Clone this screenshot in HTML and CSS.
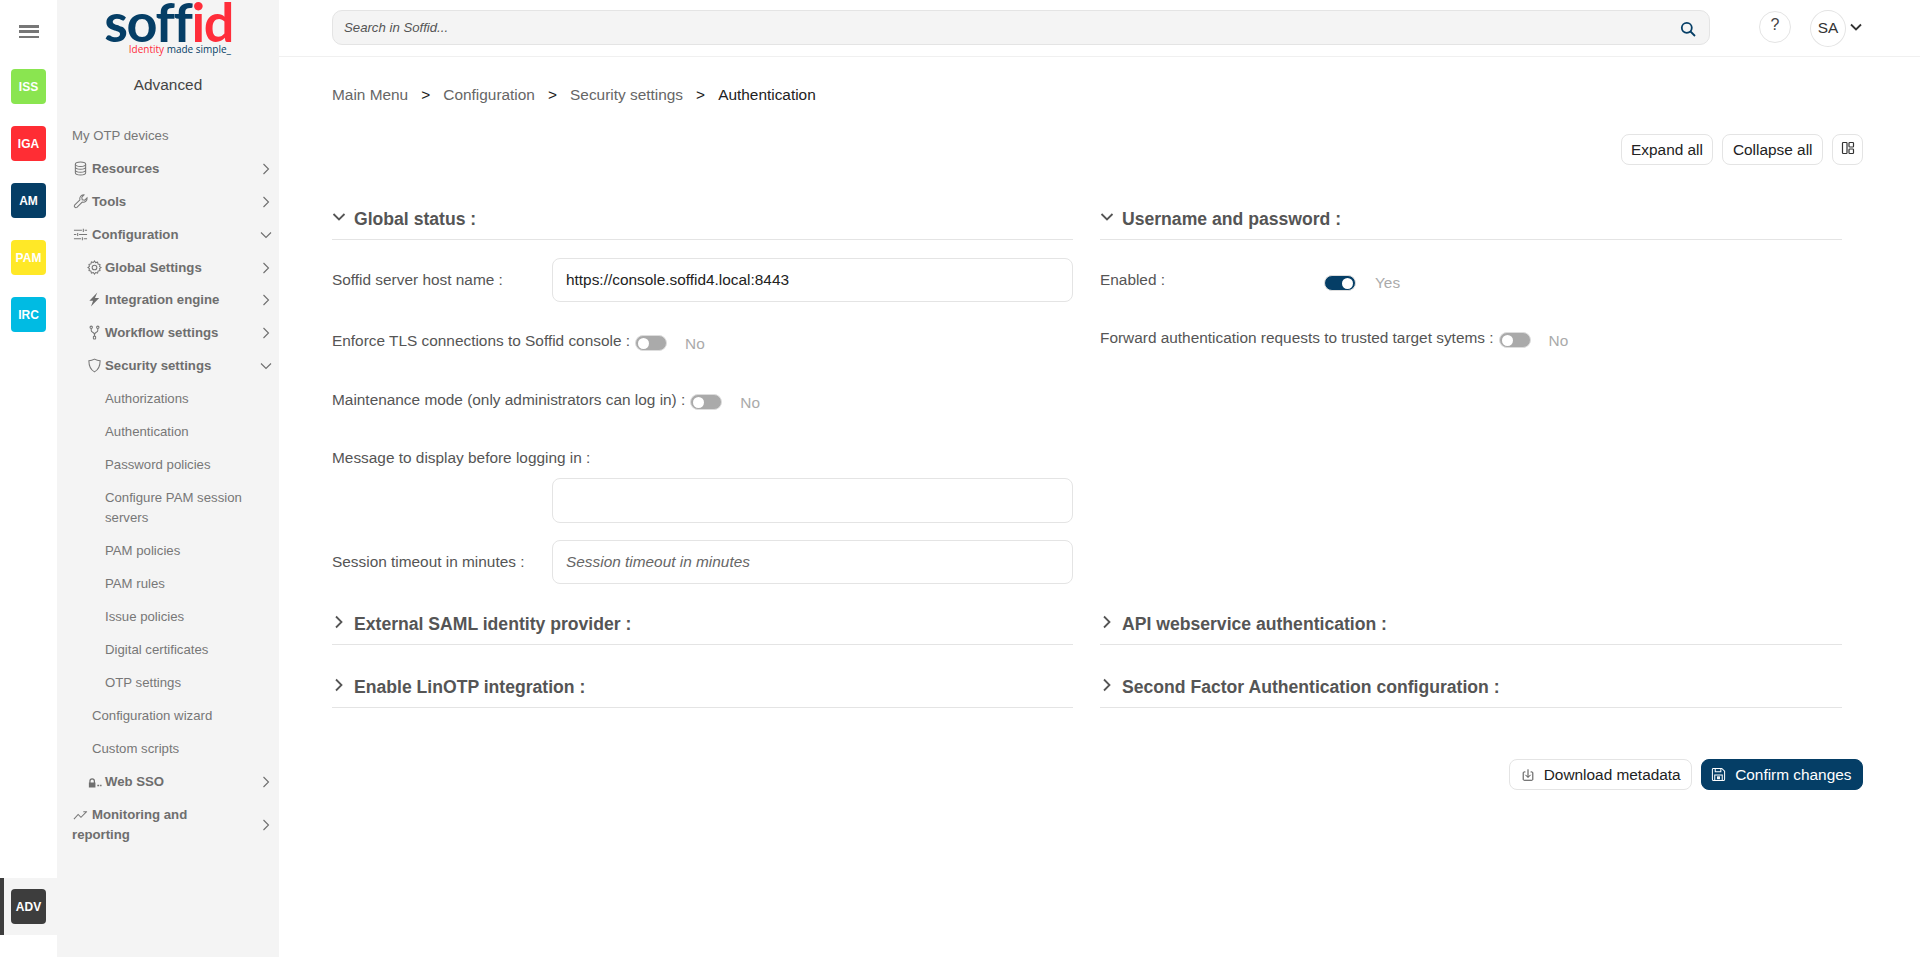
FILE: index.html
```html
<!DOCTYPE html>
<html lang="en">
<head>
<meta charset="utf-8">
<title>Soffid - Authentication</title>
<link rel="stylesheet" href="styles.css">
</head>
<body>
<aside class="rail">
  <button class="burger" aria-label="Menu"><span></span><span></span><span></span></button>
  <div class="rail-item"><span class="tile iss">ISS</span></div>
  <div class="rail-item"><span class="tile iga">IGA</span></div>
  <div class="rail-item"><span class="tile am">AM</span></div>
  <div class="rail-item"><span class="tile pam">PAM</span></div>
  <div class="rail-item"><span class="tile irc">IRC</span></div>
  <div class="rail-item active"><span class="tile adv">ADV</span></div>
</aside>
<nav class="side">
  <div class="logo">
    <div class="logo-word"><span class="navy">soff</span><span class="red">id</span></div>
    <div class="logo-tag"><span class="red">Identity</span> <span class="navy">made simple_</span></div>
  </div>
  <div class="side-title">Advanced</div>
  <ul class="menu">
    <li class="row"><span class="txt">My OTP devices</span></li>
    <li class="row bold"><span class="txt"><svg class="ico" viewBox="0 0 16 16"><ellipse cx="8" cy="3.4" rx="5.5" ry="2.4"/><path d="M2.5 3.4v9.2c0 1.3 2.5 2.4 5.500 2.400s5.500-1.100 5.500-2.400V3.400M2.500 6.500c0 1.300 2.500 2.400 5.500 2.400s5.500-1.100 5.500-2.400M2.500 9.600c0 1.300 2.500 2.400 5.500 2.400s5.500-1.100 5.500-2.400"/></svg>Resources</span><svg class="chev" viewBox="0 0 12 12"><path d="M3.500 1l5 5-5 5"/></svg></li>
    <li class="row bold"><span class="txt"><svg class="ico" viewBox="0 0 16 16"><path d="M15 4.200a4 4 0 0 1-5.200 4.400L4.200 14.300a1.800 1.800 0 0 1-2.500-2.500l5.700-5.600A4 4 0 0 1 11.800 1L9.400 3.400l.4 2.800 2.800.4z"/></svg>Tools</span><svg class="chev" viewBox="0 0 12 12"><path d="M3.500 1l5 5-5 5"/></svg></li>
    <li class="row bold"><span class="txt"><svg class="ico" viewBox="0 0 16 16"><path d="M1 3.500h8.500M12.500 3.500H15M1 8h2.500M6.500 8H15M1 12.500h7.500M11.500 12.500H15M11 1.800v3.400M5 6.300v3.400M10 10.800v3.400"/></svg>Configuration</span><svg class="chev" viewBox="0 0 12 12"><path d="M1 3.500l5 5 5-5"/></svg></li>
    <li class="row bold lv2 short"><span class="txt"><svg class="ico" viewBox="0 0 16 16"><path d="M8 1l1.200 1.800 2.100-.5.500 2.100 2.100.5-.5 2.100L15 8l-1.600 1.200.5 2.100-2.100.5-.5 2.100-2.100-.5L8 15l-1.200-1.600-2.100.5-.5-2.100-2.100-.5.5-2.100L1 8l1.600-1.200-.5-2.100 2.100-.5.500-2.100 2.100.5z"/><circle cx="8" cy="8" r="2.500"/></svg>Global Settings</span><svg class="chev" viewBox="0 0 12 12"><path d="M3.500 1l5 5-5 5"/></svg></li>
    <li class="row bold lv2"><span class="txt"><svg class="ico solid" viewBox="0 0 16 16"><path d="M11 .5L2.500 9.200h4l-2.300 6.300 8.800-9.200H8.500z"/></svg>Integration engine</span><svg class="chev" viewBox="0 0 12 12"><path d="M3.500 1l5 5-5 5"/></svg></li>
    <li class="row bold lv2"><span class="txt"><svg class="ico" viewBox="0 0 16 16"><circle cx="4.500" cy="2.500" r="1.300"/><circle cx="11.500" cy="2.500" r="1.300"/><rect x="6.800" y="12" width="2.400" height="3" rx=".5"/><path d="M4.500 3.800v2c0 2 3.500 2 3.500 4.500V12M11.500 3.800v2c0 2-3.500 2-3.500 4.500"/></svg>Workflow settings</span><svg class="chev" viewBox="0 0 12 12"><path d="M3.500 1l5 5-5 5"/></svg></li>
    <li class="row bold lv2"><span class="txt"><svg class="ico" viewBox="0 0 16 16"><path d="M8 1.200c2 1 4 1.600 6 1.800 0 5.500-1.500 9.500-6 11.800C3.500 12.500 2 8.500 2 3c2-.2 4-.8 6-1.800z"/></svg>Security settings</span><svg class="chev" viewBox="0 0 12 12"><path d="M1 3.500l5 5 5-5"/></svg></li>
    <li class="row lv3"><span class="txt">Authorizations</span></li>
    <li class="row lv3"><span class="txt">Authentication</span></li>
    <li class="row lv3"><span class="txt">Password policies</span></li>
    <li class="row lv3"><span class="txt">Configure PAM session servers</span></li>
    <li class="row lv3"><span class="txt">PAM policies</span></li>
    <li class="row lv3"><span class="txt">PAM rules</span></li>
    <li class="row lv3"><span class="txt">Issue policies</span></li>
    <li class="row lv3"><span class="txt">Digital certificates</span></li>
    <li class="row lv3"><span class="txt">OTP settings</span></li>
    <li class="row lv1"><span class="txt">Configuration wizard</span></li>
    <li class="row lv1"><span class="txt">Custom scripts</span></li>
    <li class="row bold lv2"><span class="txt"><svg class="ico solid" viewBox="0 0 16 16"><path d="M2.500 9V7.500a3 3 0 0 1 6 0V9h.5v5.500H2V9zm1.300 0h3.400V7.500a1.700 1.700 0 0 0-3.400 0zM11 11.500h2V13h-2zM14 11.500h1.500V13H14z"/></svg>Web SSO</span><svg class="chev" viewBox="0 0 12 12"><path d="M3.500 1l5 5-5 5"/></svg></li>
    <li class="row bold"><span class="txt"><svg class="ico" viewBox="0 0 16 16"><path d="M1 13l4.500-5 3 3L14.500 5M11 5h4v0"/></svg>Monitoring and reporting</span><svg class="chev" viewBox="0 0 12 12"><path d="M3.500 1l5 5-5 5"/></svg></li>
  </ul>
</nav>
<div class="page">
  <header class="top">
    <div class="search">
      <span class="search-ph">Search in Soffid...</span>
      <svg class="search-ico" viewBox="0 0 16 16"><circle cx="6.800" cy="6.800" r="5"/><path d="M10.500 10.500L15 15"/></svg>
    </div>
    <span class="help">?</span>
    <span class="avatar">SA</span>
    <svg class="avatar-chev" viewBox="0 0 12 8"><path d="M1 1.500l5 5 5-5"/></svg>
  </header>
  <main class="content">
    <ol class="crumbs">
      <li>Main Menu</li><li class="sep">&gt;</li>
      <li>Configuration</li><li class="sep">&gt;</li>
      <li>Security settings</li><li class="sep">&gt;</li>
      <li class="cur">Authentication</li>
    </ol>
    <div class="tools">
      <button class="btn">Expand all</button>
      <button class="btn">Collapse all</button>
      <button class="btn btn-ico" aria-label="Layout"><svg viewBox="0 0 14 14"><rect x="1.500" y="1.500" width="4.500" height="11" rx=".8"/><rect x="8" y="1.500" width="4.500" height="4.500" rx=".8"/><rect x="8" y="8" width="4.500" height="4.500" rx=".8"/></svg></button>
    </div>
    <div class="grid">
      <section class="sec">
        <h2 class="sec-head"><svg class="sec-chev" viewBox="0 0 14 14"><path d="M1.500 4l5.500 5.500L12.500 4"/></svg>Global status :</h2>
        <div class="field f-host"><label class="lab">Soffid server host name :</label><div class="box">https://console.soffid4.local:8443</div></div>
        <div class="tog-row r-tls"><label>Enforce TLS connections to Soffid console :</label><span class="tog"></span><span class="val">No</span></div>
        <div class="tog-row r-maint"><label>Maintenance mode (only administrators can log in) :</label><span class="tog"></span><span class="val">No</span></div>
        <div class="msg-label">Message to display before logging in :</div>
        <div class="box area"></div>
        <div class="field f-session"><label class="lab">Session timeout in minutes :</label><div class="box ph">Session timeout in minutes</div></div>
      </section>
      <section class="sec">
        <h2 class="sec-head"><svg class="sec-chev" viewBox="0 0 14 14"><path d="M1.500 4l5.500 5.500L12.500 4"/></svg>Username and password :</h2>
        <div class="tog-row r-enabled"><label class="lab">Enabled :</label><span class="tog on"></span><span class="val">Yes</span></div>
        <div class="tog-row r-fwd"><label>Forward authentication requests to trusted target sytems :</label><span class="tog"></span><span class="val">No</span></div>
      </section>
      <section class="sec"><h2 class="sec-head"><svg class="sec-chev" viewBox="0 0 14 14"><path d="M4 1.500L9.500 7 4 12.500"/></svg>External SAML identity provider :</h2></section>
      <section class="sec"><h2 class="sec-head"><svg class="sec-chev" viewBox="0 0 14 14"><path d="M4 1.500L9.500 7 4 12.500"/></svg>API webservice authentication :</h2></section>
      <section class="sec"><h2 class="sec-head"><svg class="sec-chev" viewBox="0 0 14 14"><path d="M4 1.500L9.500 7 4 12.500"/></svg>Enable LinOTP integration :</h2></section>
      <section class="sec"><h2 class="sec-head"><svg class="sec-chev" viewBox="0 0 14 14"><path d="M4 1.500L9.500 7 4 12.500"/></svg>Second Factor Authentication configuration :</h2></section>
    </div>
    <div class="actions">
      <button class="btn btn-dl"><svg class="btn-svg" viewBox="0 0 16 16"><path d="M8 1.500v9M5 7.800L8 10.800l3-3M5 4.500H3.500a1 1 0 0 0-1 1V13a1 1 0 0 0 1 1h9a1 1 0 0 0 1-1V5.500a1 1 0 0 0-1-1H11"/></svg>Download metadata</button>
      <button class="btn primary"><svg class="btn-svg" viewBox="0 0 16 16"><path d="M2.500 1.500h9l3 3V13a1.500 1.500 0 0 1-1.500 1.500H3A1.500 1.500 0 0 1 1.500 13V2.500a1 1 0 0 1 1-1z"/><path d="M4.500 1.500v3.500h6V1.500M4 14.500V8.500h8v6"/><rect x="7" y="10.500" width="2" height="2"/></svg>Confirm changes</button>
    </div>
  </main>
</div>
</body>
</html>
```
FILE: styles.css
```css
* { box-sizing: border-box; }
html, body { height: 100%; margin: 0; }
body {
  display: flex;
  overflow: hidden;
  background: #fff;
  color: #555;
  font-family: "Liberation Sans", Arial, sans-serif;
  font-size: 15.400px;
}
ul, ol { list-style: none; margin: 0; padding: 0; }
button { font-family: inherit; }

/* Icon rail */
.rail {
  width: 57px;
  flex: none;
  display: flex;
  flex-direction: column;
  padding-bottom: 22px;
}
.burger {
  display: flex;
  flex-direction: column;
  justify-content: space-between;
  width: 20px;
  height: 13px;
  margin: 25px 0 20px 19px;
  padding: 0;
  border: 0;
  background: none;
}
.burger span { display: block; height: 2.500px; background: #777; }
.rail-item {
  height: 57px;
  flex: none;
  padding-left: 11px;
  display: flex;
  align-items: center;
}
.rail-item.active {
  margin-top: auto;
  background: #f4f4f4;
  border-left: 4px solid #3d3d3d;
  padding-left: 7px;
}
.tile {
  width: 35px;
  height: 35px;
  border-radius: 4px;
  display: flex;
  align-items: center;
  justify-content: center;
  color: #fff;
  font-size: 12px;
  font-weight: 700;
}
.iss { background: #8ae550; }
.iga { background: #ff2d34; }
.am { background: #053e66; }
.pam { background: #ffe827; }
.irc { background: #00bbe3; }
.adv { background: #3d3d3d; }

/* Sidebar */
.side {
  width: 222px;
  flex: none;
  background: #f4f4f4;
  color: #777;
  font-size: 13.200px;
  line-height: 20px;
}
.logo { height: 56px; text-align: right; padding-right: 48px; }
.logo-word {
  font-family: Lato, sans-serif;
  font-size: 54px;
  font-weight: 700;
  line-height: 43px;
  letter-spacing: -1.400px;
  margin-right: -2px;
}
.logo-tag { font-family: "Open Sans", sans-serif; font-size: 10px; line-height: 11px; margin-top: 1px; }
.navy { color: #053e66; }
.red { color: #ff2d3a; }
.side-title { color: #444; font-size: 15.400px; text-align: center; line-height: 20px; margin: 19px 0 24px; }
.row {
  display: flex;
  align-items: center;
  justify-content: space-between;
  padding: 6.500px 0 6.500px 15px;
}
.row.short { padding-bottom: 5.500px; }
.row .txt { width: 173px; }
.bold { font-weight: 700; color: #6e6e6e; }
.lv1 { padding-left: 35px; }
.lv2 { padding-left: 29px; }
.lv3 { padding-left: 48px; }
.lv1 .txt { width: 153px; }
.lv2 .txt { width: 159px; }
.lv3 .txt { width: 140px; }
.ico {
  width: 15px;
  height: 15px;
  margin: 0 4px 0 1px;
  vertical-align: -3px;
  fill: none;
  stroke: #777;
  stroke-width: 1.100;
}
.lv2 .ico { margin-right: 3px; }
.ico.solid { fill: #6e6e6e; stroke: none; }
.chev {
  width: 12px;
  height: 12px;
  margin-right: 7px;
  flex: none;
  fill: none;
  stroke: #6e6e6e;
  stroke-width: 1.100;
}

/* Page */
.page { flex: 1; min-width: 0; }
.top {
  height: 57px;
  border-bottom: 1px solid #f0f0f0;
  padding-left: 53px;
  display: flex;
  align-items: flex-start;
}
.search {
  width: 1378px;
  height: 35px;
  margin-top: 10px;
  background: #f4f4f4;
  border: 1px solid #e4e4e4;
  border-radius: 10px;
  padding: 0 13px 0 11px;
  display: flex;
  align-items: center;
  justify-content: space-between;
}
.search-ph { font-size: 13.200px; font-style: italic; color: #555; }
.search-ico { width: 16px; height: 16px; margin-top: 2px; fill: none; stroke: #053e66; stroke-width: 1.800; }
.help {
  width: 32px;
  height: 32px;
  margin: 11px 0 0 49px;
  border: 1px solid #e4e4e4;
  border-radius: 50%;
  font-size: 16px;
  color: #444;
  display: flex;
  align-items: center;
  justify-content: center;
  padding-bottom: 4px;
}
.avatar {
  width: 36px;
  height: 37px;
  margin: 10px 0 0 19px;
  border: 1px solid #e4e4e4;
  border-radius: 50%;
  color: #333;
  display: flex;
  align-items: center;
  justify-content: center;
  padding-bottom: 2px;
}
.avatar-chev { width: 12px; height: 8px; margin: 23px 0 0 4px; fill: none; stroke: #333; stroke-width: 1.800; }

.content { padding: 27.500px 57px 0 53px; }
.crumbs { display: flex; align-items: center; height: 20px; color: #666; }
.crumbs .sep { color: #222; margin: 0 13.100px; }
.crumbs .cur { color: #222; }
.tools { display: flex; justify-content: flex-end; gap: 9px; margin-top: 29.500px; }
.btn {
  height: 31px;
  padding: 0 9.500px;
  background: #fff;
  border: 1px solid #e4e4e4;
  border-radius: 8px;
  color: #222;
  font-size: 15.400px;
  display: inline-flex;
  align-items: center;
}
.btn-ico { width: 31px; padding: 0 0 4px; justify-content: center; }
.btn-ico svg { width: 14px; height: 14px; fill: none; stroke: #333; stroke-width: 1.200; }
.btn-svg { width: 14px; height: 14px; margin-right: 9px; fill: none; stroke: #444; stroke-width: 1.100; }
.btn-dl { padding: 0 10px 0 11px; }

.grid {
  display: grid;
  grid-template-columns: 741px 742px;
  column-gap: 27px;
  margin-top: 34px;
}
.sec { margin-bottom: 22px; }
.sec-head {
  height: 41px;
  margin: 0;
  border-bottom: 1px solid #e4e4e4;
  color: #555;
  font-size: 17.600px;
  font-weight: 700;
  line-height: 40px;
  padding-top: 0.500px;
  display: flex;
  align-items: center;
}
.sec-chev { width: 14px; height: 14px; margin: -4.500px 8px 0 0; flex: none; fill: none; stroke: #555; stroke-width: 1.800; }
.field { display: flex; align-items: center; }
.lab { width: 220px; flex: none; }
.box {
  flex: 1;
  height: 44px;
  border: 1px solid #e4e4e4;
  border-radius: 8px;
  padding: 0 13px;
  display: flex;
  align-items: center;
  color: #222;
}
.f-host { margin-top: 18px; }
.tog-row { display: flex; height: 20px; line-height: 20px; }
.r-tls { margin-top: 29px; }
.r-maint { margin-top: 39px; }
.msg-label { margin-top: 38px; line-height: 20px; }
.area { margin: 10px 0 0 220px; height: 45px; }
.f-session { margin-top: 17px; margin-bottom: -2px; }
.ph { font-style: italic; color: #666; }
.r-enabled { margin-top: 30px; }
.r-enabled .lab { width: 224px; }
.r-enabled .val { margin-left: 19px; }
.r-fwd { margin-top: 38px; }
.tog {
  width: 32px;
  height: 16px;
  flex: none;
  margin: 4px 0 0 5px;
  background: #aaa;
  border: 1px solid #ddd;
  border-radius: 9px;
  display: flex;
  align-items: center;
  padding: 0 2px;
}
.tog::before { content: ""; width: 11px; height: 11px; border-radius: 50%; background: #fff; }
.tog.on { background: #053e66; justify-content: flex-end; margin: 5px 0 0; }
.val { color: #aaa; margin: 3px 0 0 18px; }
.actions { display: flex; justify-content: flex-end; gap: 9px; margin-top: 29px; }
.primary { background: #053e66; border-color: #053e66; color: #fff; padding-right: 10.500px; }
.primary .btn-svg { width: 15px; height: 15px; stroke: #fff; }
```
